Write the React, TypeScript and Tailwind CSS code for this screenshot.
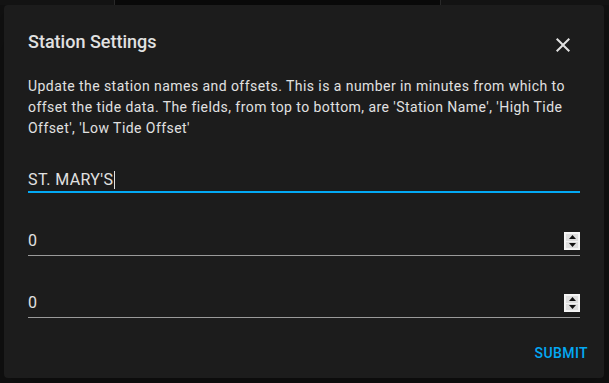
import React from 'react';

const StepperIcon: React.FC = () => (
  <div className="flex flex-col w-[16px] h-[18px] bg-[#f3f3f3] border border-[#f7f7f7] p-[1px] gap-[1px]">
    <div className="flex-1 flex items-center justify-center bg-[#dedede]">
      <svg width="7" height="4" viewBox="0 0 7 4">
        <path d="M3.5 0 7 4H0z" fill="#111" />
      </svg>
    </div>
    <div className="flex-1 flex items-center justify-center bg-[#dedede]">
      <svg width="7" height="4" viewBox="0 0 7 4">
        <path d="M0 0h7L3.5 4z" fill="#111" />
      </svg>
    </div>
  </div>
);

const NumberField: React.FC<{ value: string; className?: string }> = ({ value, className }) => (
  <div className={`flex items-center justify-between pb-[2px] border-b border-[#9a9a9a] ${className ?? ''}`}>
    <span className="text-[16px] leading-[24px] tracking-[0.4px] text-[#e1e1e1]">{value}</span>
    <StepperIcon />
  </div>
);

export default function App() {
  return (
    <div className="relative w-[609px] h-[383px] bg-[#111111] overflow-hidden font-['Roboto',sans-serif]">
      {/* page behind the dialog */}
      <div className="flex h-[5px]">
        <div className="w-[114px] bg-[#141414]" />
        <div className="w-px bg-[#2a2a2a]" />
        <div className="w-[325px] bg-[#0a0a0a]" />
        <div className="w-px bg-[#2a2a2a]" />
        <div className="flex-1 bg-[#141414]" />
      </div>

      {/* dialog */}
      <div className="absolute left-[4px] top-[5px] w-[600px] h-[373px] bg-[#1c1c1c] rounded-[4px] shadow-[0_11px_15px_-7px_rgba(0,0,0,0.2),0_24px_38px_3px_rgba(0,0,0,0.14)] flex flex-col">
        <div className="flex items-start justify-between pl-[24px] pr-[29px] pt-[21px]">
          <h2 className="text-[18px] leading-[32px] font-medium text-[#e1e1e1]">Station Settings</h2>
          <button className="mt-[7px] w-[24px] h-[24px] flex items-center justify-center text-[#e1e1e1]">
            <svg width="24" height="24" viewBox="0 0 24 24" fill="currentColor">
              <path d="M19 6.41 17.59 5 12 10.59 6.41 5 5 6.41 10.59 12 5 17.59 6.41 19 12 13.41 17.59 19 19 17.59 13.41 12z" />
            </svg>
          </button>
        </div>

        <div className="px-[24px]">
          <p className="mt-[18px] text-[14px] leading-[21px] tracking-[0.44px] text-[#e1e1e1]">
            Update the station names and offsets. This is a number in minutes from which to offset the tide data. The fields, from top to bottom, are 'Station Name', 'High Tide Offset', 'Low Tide Offset'
          </p>

          <div className="mt-[29px] flex items-center border-b-2 border-[#03a9f4]">
            <span className="text-[16px] leading-[23px] tracking-[0.4px] text-[#e1e1e1]">ST. MARY'S</span>
            <span className="w-px h-[18px] bg-[#e1e1e1] ml-[1px]" />
          </div>

          <NumberField value="0" className="mt-[36px]" />
          <NumberField value="0" className="mt-[35px]" />
        </div>

        <div className="flex justify-end mt-auto pr-[8px] pb-[7px]">
          <button className="h-[36px] px-[8px] text-[14px] font-medium uppercase tracking-[0.4px] text-[#03a9f4]">
            Submit
          </button>
        </div>
      </div>
    </div>
  );
}
